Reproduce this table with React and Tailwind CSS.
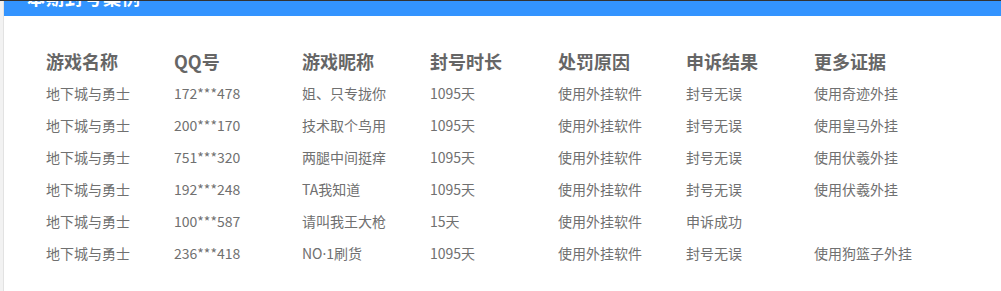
import React from "react";

const columns = ["游戏名称", "QQ号", "游戏昵称", "封号时长", "处罚原因", "申诉结果", "更多证据"];

const rows = [
    ["地下城与勇士", "172***478", "姐、只专拢你", "1095天", "使用外挂软件", "封号无误", "使用奇迹外挂"],
    ["地下城与勇士", "200***170", "技术取个鸟用", "1095天", "使用外挂软件", "封号无误", "使用皇马外挂"],
    ["地下城与勇士", "751***320", "两腿中间挺痒", "1095天", "使用外挂软件", "封号无误", "使用伏羲外挂"],
    ["地下城与勇士", "192***248", "TA我知道", "1095天", "使用外挂软件", "封号无误", "使用伏羲外挂"],
    ["地下城与勇士", "100***587", "请叫我王大枪", "15天", "使用外挂软件", "申诉成功", ""],
    ["地下城与勇士", "236***418", "NO·1刷货", "1095天", "使用外挂软件", "封号无误", "使用狗篮子外挂"],
];

// latin middle dot instead of the wide CJK one
const Cell = ({ text }) => {
    if (!text.includes("·")) return text;
    const [a, b] = text.split("·");
    return (
        <>
            {a}
            <span style={{ fontFamily: '"Noto Sans", sans-serif' }}>·</span>
            {b}
        </>
    );
};

export default function App() {
    return (
        <div
            className="w-[1001px] h-[291px] overflow-hidden bg-white flex flex-col"
            style={{ fontFamily: '"Noto Sans CJK SC", "Noto Sans", sans-serif' }}
        >
            <div className="h-px bg-[#333]" />
            <div className="flex flex-1">
                {/* side rail */}
                <div className="w-[4px] bg-[#f2f2f2] border-r border-[#e2e2e2]" />

                <div className="flex-1 flex flex-col">
                    {/* title bar, heading scrolled partly out of view */}
                    <div className="h-[15px] bg-[#3394ff] overflow-hidden pl-[23px]">
                        <h3 className="text-white font-bold text-[18px] leading-[18px] -mt-[13px] tracking-[1px]">
                            本期封号案例
                        </h3>
                    </div>

                    <div className="pl-[42px] pt-[29px]">
                        <div className="flex h-[32px] items-center">
                            {columns.map((c) => (
                                <div key={c} className="w-[128px] text-[18px] font-bold text-[#666] leading-none">
                                    {c}
                                </div>
                            ))}
                        </div>
                        {rows.map((r, i) => (
                            <div key={i} className="flex h-[32px] items-center">
                                {r.map((cell, j) => (
                                    <div key={j} className="w-[128px] text-[14px] text-[#707070] leading-none whitespace-nowrap">
                                        <Cell text={cell} />
                                    </div>
                                ))}
                            </div>
                        ))}
                    </div>
                </div>
            </div>
        </div>
    );
}
